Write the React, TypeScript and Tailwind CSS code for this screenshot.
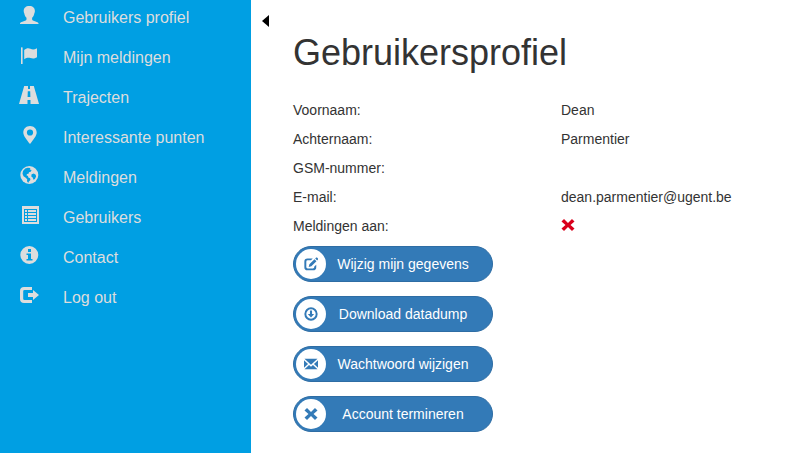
import type { ReactNode } from "react";

type IconProps = { className?: string; children: ReactNode };

function Icon({ className = "", children }: IconProps) {
  return (
    <svg viewBox="0 0 20 20" fill="currentColor" aria-hidden="true" className={"shrink-0 " + className}>
      {children}
    </svg>
  );
}

const crossPath = "M4.3 1.5 10 7.1l5.7-5.6 3.6 3.6L13.6 10l5.7 4.9-3.6 3.6-5.7-5.6-5.7 5.6-3.6-3.6L6.4 10 .7 5.1z";

const menu: { label: string; icon: ReactNode }[] = [
  {
    label: "Gebruikers profiel",
    icon: (
      <path d="M10.300 1C6.700 1 4.700 3 4.700 6c0 1 .2 1.800.6 2.600.3 1.900 1.100 3.200 2.200 4.200v1.500c0 .5-.3.900-.8 1.100L2.700 17C1.600 17.400 1 17.900 1 18.600V19h18.500v-.4c0-.7-.6-1.200-1.700-1.600l-3.900-1.600c-.5-.2-.8-.6-.8-1.100v-1.500c1.100-1 1.900-2.300 2.200-4.200.4-.8.6-1.600.6-2.600 0-3-2-5-5.600-5z" />
    ),
  },
  {
    label: "Mijn meldingen",
    icon: (
      <>
        <path d="M2 2.600q.8-.8 1.600 0V19H2z" />
        <path d="M5.200 5C7.500 3 9.600 3 11.400 3.800c2.200.9 4 .8 6.600-.6v9c-2.600 1.500-4.400 1.400-6.500.8-2.200-.6-3.800-.4-6.300 1.200z" />
      </>
    ),
  },
  {
    label: "Trajecten",
    icon: (
      <path
        fillRule="evenodd"
        d="M5.200 1H9v3h2V1h3.800L20 19h-8.500v-4h-3v4H0zM8.800 6.300l-.2 5.700h2.800l-.2-5.700z"
      />
    ),
  },
  {
    label: "Interessante punten",
    icon: (
      <path
        fillRule="evenodd"
        d="M11 .9c3.900 0 6.700 2.900 6.700 6.500 0 3.400-3.300 6.800-6.700 11.700-3.400-4.900-6.700-8.300-6.700-11.700C4.300 3.800 7.100.9 11 .9zm0 3.500a3.100 3.100 0 1 0 0 6.200 3.100 3.100 0 0 0 0-6.200z"
      />
    ),
  },
  {
    label: "Meldingen",
    icon: (
      <>
        <circle cx="10.300" cy="10" r="9" />
        <path
          fill="#009fe3"
          d="M6.200 3.600 8.800 2.800l2.600.2-.6 1.500 1.800.5-.9 1.700-1.700.6-.5 1.500-1.500.2-.5 1.200 1.500.8.3 1.500 1.800.8.3 1.600-1.500 1.500-.6 1.500-1.300-1.700.2-2-1.800-1.700-1.900-1.300-1-2.400.5-2.700zM12.600 9.200l2.200-.7 1.900 1.200.4 1.900-1.200 2.500-1.400.7-.8-2.200-1.400-1.200z"
        />
      </>
    ),
  },
  {
    label: "Gebruikers",
    icon: (
      <path
        fillRule="evenodd"
        d="M3 1h17v18H3zm2 3v13h13V4zM6 5h2v2H6zm3 0h8v2H9zM6 8h2v2H6zm3 0h8v2H9zM6 11h2v2H6zm3 0h8v2H9zM6 14h2v2H6zm3 0h8v2H9z"
      />
    ),
  },
  {
    label: "Contact",
    icon: (
      <path
        fillRule="evenodd"
        d="M10.300 1a9 9 0 1 1 0 18 9 9 0 0 1 0-18zM9 4v3h3V4zM7.500 8.500V10H9v4H7.500v1.500h6V14H12V8.500z"
      />
    ),
  },
  {
    label: "Log out",
    icon: (
      <>
        <path d="M13 2H5C2.500 2 1 3.500 1 6v8c0 2.500 1.500 4 4 4h8v-3H5.500q-1.300 0-1.300-1.300V6.300Q4.200 5 5.500 5H13z" />
        <path d="M14 4.900 20 10l-6 5.100V12H9V8h5z" />
      </>
    ),
  },
];

const details: { label: string; value: ReactNode }[] = [
  { label: "Voornaam:", value: "Dean" },
  { label: "Achternaam:", value: "Parmentier" },
  { label: "GSM-nummer:", value: "" },
  { label: "E-mail:", value: "dean.parmentier@ugent.be" },
  {
    label: "Meldingen aan:",
    value: (
      <span role="img" aria-label="Nee" className="flex h-5 items-center text-[#d9001b]">
        <Icon className="mb-[2px] size-[14px]">
          <path d={crossPath} />
        </Icon>
      </span>
    ),
  },
];

const actions: { label: string; icon: ReactNode }[] = [
  {
    label: "Wijzig mijn gegevens",
    icon: (
      <>
        <path d="M12.500 2H5C2 2 .5 3.500.5 6.500v8C.5 17.500 2 19 5 19h8c3 0 4.500-1.500 4.500-4.500V11L14.700 13.500v.8q0 2-2 2h-7.400q-2 0-2-2V6.700q0-2 2-2h4.700z" />
        <path d="m15 3.200 2.800 2.800-7.300 7.300-3.800 1 1-3.800zM16 2.200l1.400-1.400q.6-.5 1.200 0l1.500 1.500q.5.600 0 1.200L18.800 5z" />
      </>
    ),
  },
  {
    label: "Download datadump",
    icon: (
      <path
        fillRule="evenodd"
        d="M10 .5a9.500 9.500 0 1 1 0 19 9.500 9.500 0 0 1 0-19zm0 2.800a6.700 6.700 0 1 0 0 13.400 6.700 6.700 0 0 0 0-13.400zM8.500 5h3v5h3L10 15l-4.500-5h3z"
      />
    ),
  },
  {
    label: "Wachtwoord wijzigen",
    icon: (
      <path d="M.7 2.500h18.600L10 11zM0 4.500 5.800 10 0 15.300zM20 4.500v10.800L14.200 10zM7.200 11.300 10 13.800l2.800-2.500 6.500 6.200H.7z" />
    ),
  },
  { label: "Account termineren", icon: <path d={crossPath} /> },
];

export default function App() {
  return (
    <div className="flex min-h-screen bg-white font-['Liberation_Sans',Arial,sans-serif] text-[#333333]">
      <aside className="w-[251px] shrink-0 bg-[#009fe3] pt-[6px]">
        <nav aria-label="Hoofdmenu">
          <ul className="flex flex-col gap-4">
            {menu.map((item) => (
              <li key={item.label}>
                <a href="#" className="flex h-6 items-center gap-6 pl-[19px] text-base leading-6 text-[#dddddd]">
                  <Icon className="mb-[6px] size-5">{item.icon}</Icon>
                  {item.label}
                </a>
              </li>
            ))}
          </ul>
        </nav>
      </aside>

      <main className="flex min-w-0 flex-1 items-start">
        <button type="button" aria-label="Menu inklappen" className="mt-[13px] flex h-4 w-[42px] shrink-0 items-center pl-[10px] text-black">
          <svg viewBox="0 0 8 12" fill="currentColor" className="h-3 w-2" aria-hidden="true">
            <path d="M8 0v12L1 6z" />
          </svg>
        </button>

        <div className="min-w-0 flex-1 pt-[33px]">
          <h1 className="text-4xl leading-10">Gebruikersprofiel</h1>

          <table className="mt-[22px] w-full text-left text-sm leading-5">
            <tbody>
              {details.map((row) => (
                <tr key={row.label} className="h-[29px]">
                  <th scope="row" className="w-[268px] p-0 font-normal">
                    {row.label}
                  </th>
                  <td className="p-0">{row.value}</td>
                </tr>
              ))}
            </tbody>
          </table>

          <div className="mt-[6px] flex flex-col items-start gap-[14px] pb-5">
            {actions.map((action) => (
              <button
                key={action.label}
                type="button"
                className="flex h-9 w-[200px] items-center rounded-full border border-[#2e6da4] bg-[#337ab7] pr-3 pl-[2px] text-sm leading-5 text-white"
              >
                <span className="flex size-[30px] shrink-0 items-center justify-center rounded-full bg-white text-[#337ab7]">
                  <Icon className="size-[14px]">{action.icon}</Icon>
                </span>
                <span className="flex-1 text-center whitespace-nowrap">{action.label}</span>
              </button>
            ))}
          </div>
        </div>
      </main>
    </div>
  );
}
